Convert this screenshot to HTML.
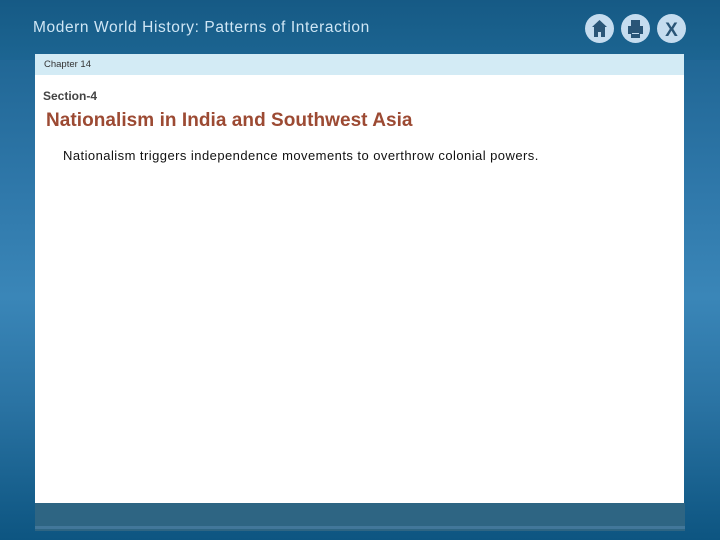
<!DOCTYPE html>
<html><head><style>
html,body{margin:0;padding:0}
body{width:720px;height:540px;position:relative;overflow:hidden;font-family:"Liberation Sans",sans-serif;
background:linear-gradient(180deg,#1a5f8c 0%,#2f78aa 35%,#3a86b8 55%,#2a73a3 75%,#0d5581 100%);}
.top{position:absolute;left:0;top:0;width:720px;height:60px;background:linear-gradient(180deg,#165a85,#1c6592);}
.title{position:absolute;left:33px;top:19px;color:#cfe6f5;font-size:15.5px;letter-spacing:0.6px;}
.white{position:absolute;left:35px;top:54px;width:649px;height:449px;background:#fff;}
.chap{position:absolute;left:35px;top:54px;width:649px;height:21px;background:#d3ebf5;}
.chap span{position:absolute;left:9px;top:5px;font-size:9.5px;color:#333;}
.sec{position:absolute;left:43px;top:89px;font-size:12px;color:#444;font-weight:bold;}
.h{position:absolute;left:46px;top:110px;font-size:19px;color:#9c4a33;font-weight:bold;letter-spacing:0.05px;}
.p{position:absolute;left:63px;top:148px;font-size:13px;color:#111;letter-spacing:0.45px;}
.bar{position:absolute;left:35px;top:503px;width:650px;height:28px;background:#2e6583;}
.bar2{position:absolute;left:35px;top:526px;width:650px;height:3px;background:#42779a;}
.ic{position:absolute;top:14px;width:29px;height:29px;border-radius:50%;background:#c5dcef;}
</style></head><body>
<div class="top"></div>
<div class="title">Modern World History: Patterns of Interaction</div>
<div class="ic" style="left:585px"><svg width="29" height="29"><path d="M14.5 6 L7 13 L9 13 L9 23 L13 23 L13 18 L16 18 L16 23 L20 23 L20 13 L22 13 Z" fill="#2a5577"/></svg></div>
<div class="ic" style="left:621px"><svg width="29" height="29"><rect x="10" y="6" width="9" height="6" fill="#2a5577"/><rect x="7" y="12" width="15" height="8" fill="#2a5577"/><rect x="10" y="18" width="9" height="6" fill="#2a5577"/><rect x="11" y="19" width="7" height="1" fill="#c5dcef"/></svg></div>
<div class="ic" style="left:657px"><svg width="29" height="29"><text x="14.5" y="22" text-anchor="middle" font-family="Liberation Sans" font-weight="bold" font-size="19" fill="#2a5577">X</text></svg></div>
<div class="white"></div>
<div class="chap"><span>Chapter 14</span></div>
<div class="sec">Section-4</div>
<div class="h">Nationalism in India and Southwest Asia</div>
<div class="p">Nationalism triggers independence movements to overthrow colonial powers.</div>
<div class="bar"></div><div class="bar2"></div>
</body></html>
